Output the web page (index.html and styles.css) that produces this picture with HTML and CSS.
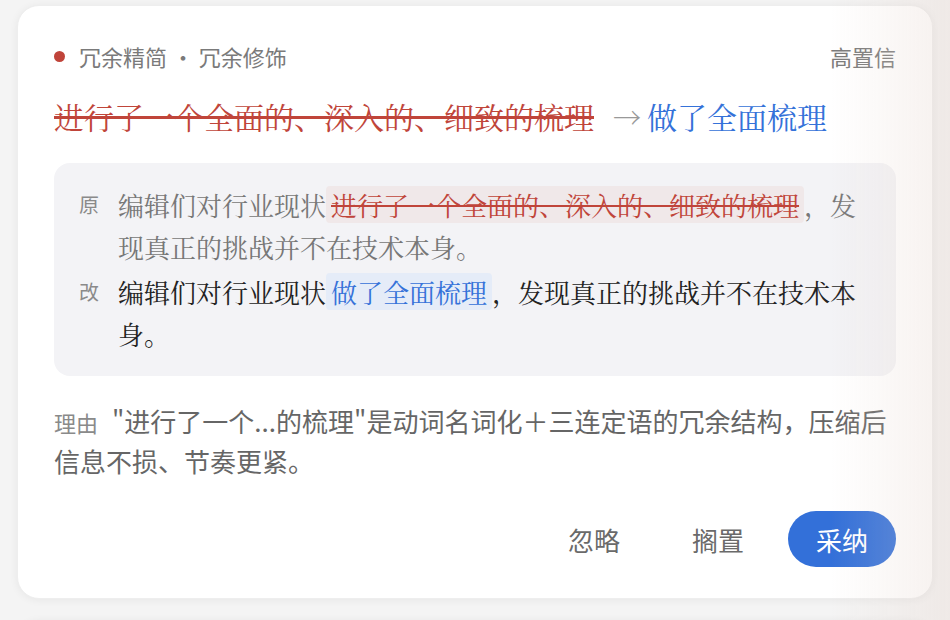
FILE: index.html
```html
<!DOCTYPE html>
<html lang="zh-CN">
<head>
  <meta charset="UTF-8">
  <title>冗余精简 建议卡片</title>
  <link rel="stylesheet" href="styles.css">
</head>
<body>
  <div class="list">
    <div class="card">
      <div class="card-head">
        <div class="tag"><span class="dot"></span>冗余精简 · 冗余修饰</div>
        <div class="confidence">高置信</div>
      </div>

      <div class="change"><span class="old">进行了一个全面的、深入的、细致的梳理</span><span class="arrow">→</span><span class="new">做了全面梳理</span></div>

      <div class="compare">
        <div class="line">
          <div class="label">原</div>
          <div class="text text-old">编辑们对行业现状<span class="mark-del">进行了一个全面的、深入的、细致的梳理</span>，发现真正的挑战并不在技术本身。</div>
        </div>
        <div class="line">
          <div class="label">改</div>
          <div class="text text-new">编辑们对行业现状<span class="mark-ins">做了全面梳理</span>，发现真正的挑战并不在技术本身。</div>
        </div>
      </div>

      <p class="reason"><span class="reason-label">理由</span>"进行了一个...的梳理"是动词名词化＋三连定语的冗余结构，压缩后信息不损、节奏更紧。</p>

      <div class="actions">
        <button class="btn">忽略</button>
        <button class="btn">搁置</button>
        <button class="btn btn-primary">采纳</button>
      </div>
    </div>

    <div class="card card-next"></div>
  </div>
  <div class="fade"></div>
</body>
</html>
```

FILE: styles.css
```css
body {
  margin: 0;
  padding: 5px 17px 0;
  background-color: #f4f4f4;
  font-family: "Noto Sans CJK SC", "Noto Sans", sans-serif;
  overflow: hidden;
}

.list {
  display: flex;
  flex-direction: column;
  gap: 21px;
}

.card {
  background-color: #fff;
  border-radius: 22px;
  padding: 35px 36px 31px;
  box-shadow: 0 1px 8px rgba(0, 0, 0, 0.06);
  border: 1px solid #eeeeee;
}

.card-next {
  height: 120px;
  padding: 0;
}

.card-head {
  display: flex;
  justify-content: space-between;
  align-items: center;
  font-size: 22px;
  line-height: 30px;
  color: #7a7a7a;
}

.tag {
  display: flex;
  align-items: center;
}

.dot {
  width: 11px;
  height: 11px;
  border-radius: 50%;
  background-color: #c0443a;
  margin-right: 14px;
}

.change {
  margin-top: 25px;
  font-family: "Noto Serif CJK SC", "Noto Sans CJK SC", serif;
  font-size: 30px;
  line-height: 40px;
}

.old {
  color: #c0453a;
  text-decoration: line-through;
  text-decoration-thickness: 3px;
}

.arrow {
  color: #999;
  font-size: 28px;
  margin: 0 6px 0 19px;
}

.new {
  color: #3572d9;
}

.compare {
  margin-top: 26px;
  background-color: #f3f3f6;
  border-radius: 16px;
  padding: 21px 30px 21px 25px;
  display: flex;
  flex-direction: column;
  gap: 3px;
}

.line {
  display: flex;
}

.label {
  width: 39px;
  flex-shrink: 0;
  font-size: 20px;
  line-height: 42px;
  color: #8a8a8a;
}

.text {
  font-family: "Noto Serif CJK SC", "Noto Sans CJK SC", serif;
  font-size: 26px;
  line-height: 42px;
}

.text-old {
  color: #777;
}

.text-new {
  color: #222;
}

.mark-del {
  background-color: #f0e8e9;
  color: #c0453a;
  text-decoration: line-through;
  text-decoration-thickness: 2px;
  border-radius: 4px;
  padding: 0 5px;
}

.mark-ins {
  background-color: #e5ecf8;
  color: #3572d9;
  border-radius: 4px;
  padding: 0 5px;
}

.reason {
  margin: 25px 0 0;
  font-size: 26px;
  line-height: 40px;
  color: #666;
}

.reason-label {
  font-size: 22px;
  line-height: 1;
  color: #8a8a8a;
  margin-right: 14px;
}

.actions {
  margin-top: 30px;
  display: flex;
  justify-content: flex-end;
  gap: 16px;
}

.btn {
  height: 56px;
  padding: 0 28px;
  border: none;
  border-radius: 28px;
  background: none;
  font-family: "Noto Sans CJK SC", sans-serif;
  font-size: 26px;
  color: #6a6a6a;
}

.btn-primary {
  background-color: #3370d9;
  color: #fff;
}

.fade {
  position: fixed;
  top: 0;
  right: 0;
  bottom: 0;
  width: 120px;
  background: linear-gradient(to right, rgba(230, 214, 206, 0), rgba(230, 214, 206, 0.35));
  pointer-events: none;
}
```
